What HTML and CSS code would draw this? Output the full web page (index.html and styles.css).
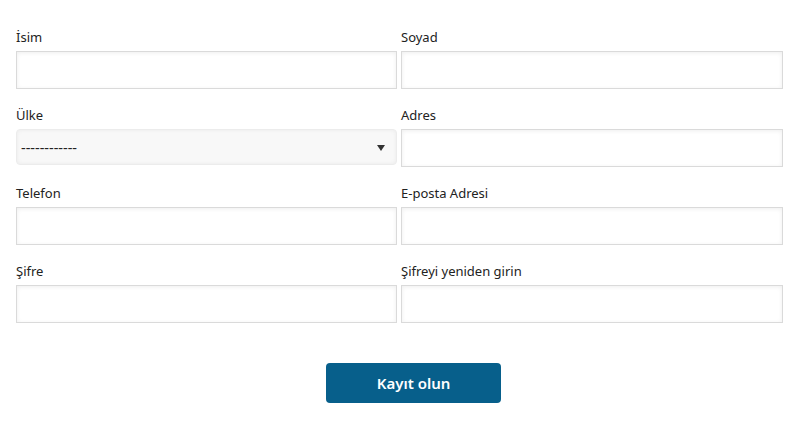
FILE: index.html
```html
<!DOCTYPE html>
<html lang="tr">
<head>
<meta charset="utf-8">
<title>Kayıt</title>
<link rel="stylesheet" href="styles.css">
</head>
<body>
<form class="signup">
  <div class="grid">
    <div class="field">
      <label class="label">İsim</label>
      <input class="input" type="text">
    </div>
    <div class="field">
      <label class="label">Soyad</label>
      <input class="input" type="text">
    </div>
    <div class="field">
      <label class="label">Ülke</label>
      <div class="select-wrap">
        <select class="select"><option>------------</option></select>
      </div>
    </div>
    <div class="field">
      <label class="label">Adres</label>
      <input class="input" type="text">
    </div>
    <div class="field">
      <label class="label">Telefon</label>
      <input class="input" type="text">
    </div>
    <div class="field">
      <label class="label">E-posta Adresi</label>
      <input class="input" type="text">
    </div>
    <div class="field">
      <label class="label">Şifre</label>
      <input class="input" type="password">
    </div>
    <div class="field">
      <label class="label">Şifreyi yeniden girin</label>
      <input class="input" type="password">
    </div>
  </div>
  <div class="actions">
    <button class="btn" type="button">Kayıt olun</button>
  </div>
</form>
</body>
</html>
```
FILE: styles.css
```css
* { box-sizing: border-box; }
html, body { margin: 0; background: #fff; }
body {
  font-family: "Segoe UI", "Noto Sans", "Open Sans", sans-serif;
  font-size: 13px;
  color: #222;
}
.signup { padding: 27px 17px 0 16px; }
.grid {
  display: grid;
  grid-template-columns: 381px 382px;
  column-gap: 4px;
  row-gap: 16px;
}
.field { display: flex; flex-direction: column; }
.label {
  display: block;
  line-height: 20px;
  height: 20px;
  margin-bottom: 4px;
}
.input {
  height: 38px;
  width: 100%;
  border: 1px solid #dadada;
  background: #fff;
  box-shadow: inset 0 1px 4px rgba(0,0,0,0.07);
  font: inherit;
  padding: 0 6px;
}
.select-wrap { position: relative; height: 38px; }
.select {
  -webkit-appearance: none;
  appearance: none;
  width: 100%;
  height: 36px;
  border: 1px solid #ececec;
  border-radius: 4px;
  background: #f8f8f8;
  box-shadow: inset 0 0 4px rgba(0,0,0,0.06);
  font-family: inherit;
  font-size: 14.5px;
  color: #222;
  padding: 0 4px;
}
.select-wrap::after {
  content: "";
  position: absolute;
  right: 12px;
  top: 16px;
  border-left: 4px solid transparent;
  border-right: 4px solid transparent;
  border-top: 6px solid #333;
}
.actions {
  display: flex;
  padding-left: 310px;
  margin-top: 40px;
}
.btn {
  width: 175px;
  height: 40px;
  border: 0;
  border-radius: 4px;
  background: #075f8b;
  color: #fff;
  font-family: inherit;
  font-size: 15px;
  font-weight: 600;
  cursor: pointer;
}
```
